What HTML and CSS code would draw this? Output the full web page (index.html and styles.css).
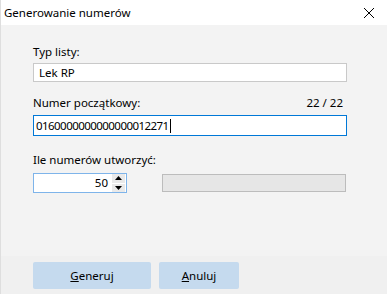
FILE: index.html
```html
<html>
<head>
<link rel="stylesheet" href="styles.css">
</head>
<body>
<div class="window">
  <div class="titlebar">
    <span class="title">Generowanie numerów</span>
    <svg class="close" width="12" height="12" viewBox="0 0 12 12"><path d="M1 1L11 11M11 1L1 11" stroke="#000" stroke-width="1"/></svg>
  </div>
  <div class="content">
    <div class="label first">Typ listy:</div>
    <div class="field">Lek RP</div>

    <div class="label second row"><span>Numer początkowy:</span><span class="count">22 / 22</span></div>
    <div class="field active"><span class="digits">0160000000000000012271</span><span class="caret"></span></div>

    <div class="label third">Ile numerów utworzyć:</div>
    <div class="spinrow">
      <div class="spin">
        <span class="value">50</span>
        <div class="arrows">
          <div class="arrow"><svg width="7" height="4" viewBox="0 0 7 4"><path d="M0 4L3.5 0L7 4Z" fill="#000"/></svg></div>
          <div class="arrow"><svg width="7" height="4" viewBox="0 0 7 4"><path d="M0 0L3.5 4L7 0Z" fill="#000"/></svg></div>
        </div>
      </div>
      <div class="progress"></div>
    </div>
  </div>
  <div class="footer">
    <button class="btn wide"><u>G</u>eneruj</button>
    <button class="btn"><u>A</u>nuluj</button>
  </div>
</div>
</body>
</html>
```
FILE: styles.css
```css
body{
margin:0; font-family:"Noto Sans", sans-serif; font-size:11.5px; color:#000;
}
.window{
width:387px; height:294px; display:flex; flex-direction:column; background:#f3f3f3; box-sizing:border-box; border-left:1px solid #dedede;
}
.titlebar{
height:25px; background:#fff; display:flex; align-items:center; justify-content:space-between; padding:0 12px 0 3px; flex-shrink:0;
}
.content{
flex:1; padding:0 40px 0 32px;
}
.label{
height:16px; line-height:16px;
}
.label.first{
margin-top:19px; margin-bottom:3px;
}
.label.second{
margin-top:13px; margin-bottom:4px;
}
.label.third{
margin-top:16px; margin-bottom:5px;
}
.row{
display:flex; justify-content:space-between; padding-right:4px;
}
.field{
height:19px; line-height:17px; background:#fff; border:1px solid #c9c9c9; box-sizing:border-box; padding-left:5px;
}
.field.active{
border-color:#0078d7; height:21px; line-height:19px; padding-left:2px;
}
.digits{
letter-spacing:-0.55px;
}
.caret{
display:inline-block; width:1px; height:14px; background:#000; vertical-align:-3px; margin-left:1px;
}
.spinrow{
display:flex; align-items:center;
}
.spin{
width:94px; height:20px; box-sizing:border-box; border:1px solid #7eb4ea; background:#fff; display:flex; align-items:center; justify-content:flex-end;
}
.value{
margin-right:4px; line-height:18px;
}
.arrows{
width:13px; height:18px; display:flex; flex-direction:column; gap:1px; margin-right:1px;
}
.arrow{
flex:1; background:#e9e9e9; display:flex; align-items:center; justify-content:center;
}
.progress{
margin-left:35px; width:184px; height:18px; box-sizing:border-box; background:#e6e6e6; border:1px solid #bcbcbc;
}
.footer{
height:38px; background:#f0f0f0; display:flex; align-items:center; gap:8px; padding-left:32px; flex-shrink:0;
}
.btn{
height:27px; width:80px; background:#c5daee; border:none; border-radius:2px; font-family:"Noto Sans", sans-serif; font-size:11.5px; color:#000; padding:0;
}
.btn.wide{
width:118px;
}
```
